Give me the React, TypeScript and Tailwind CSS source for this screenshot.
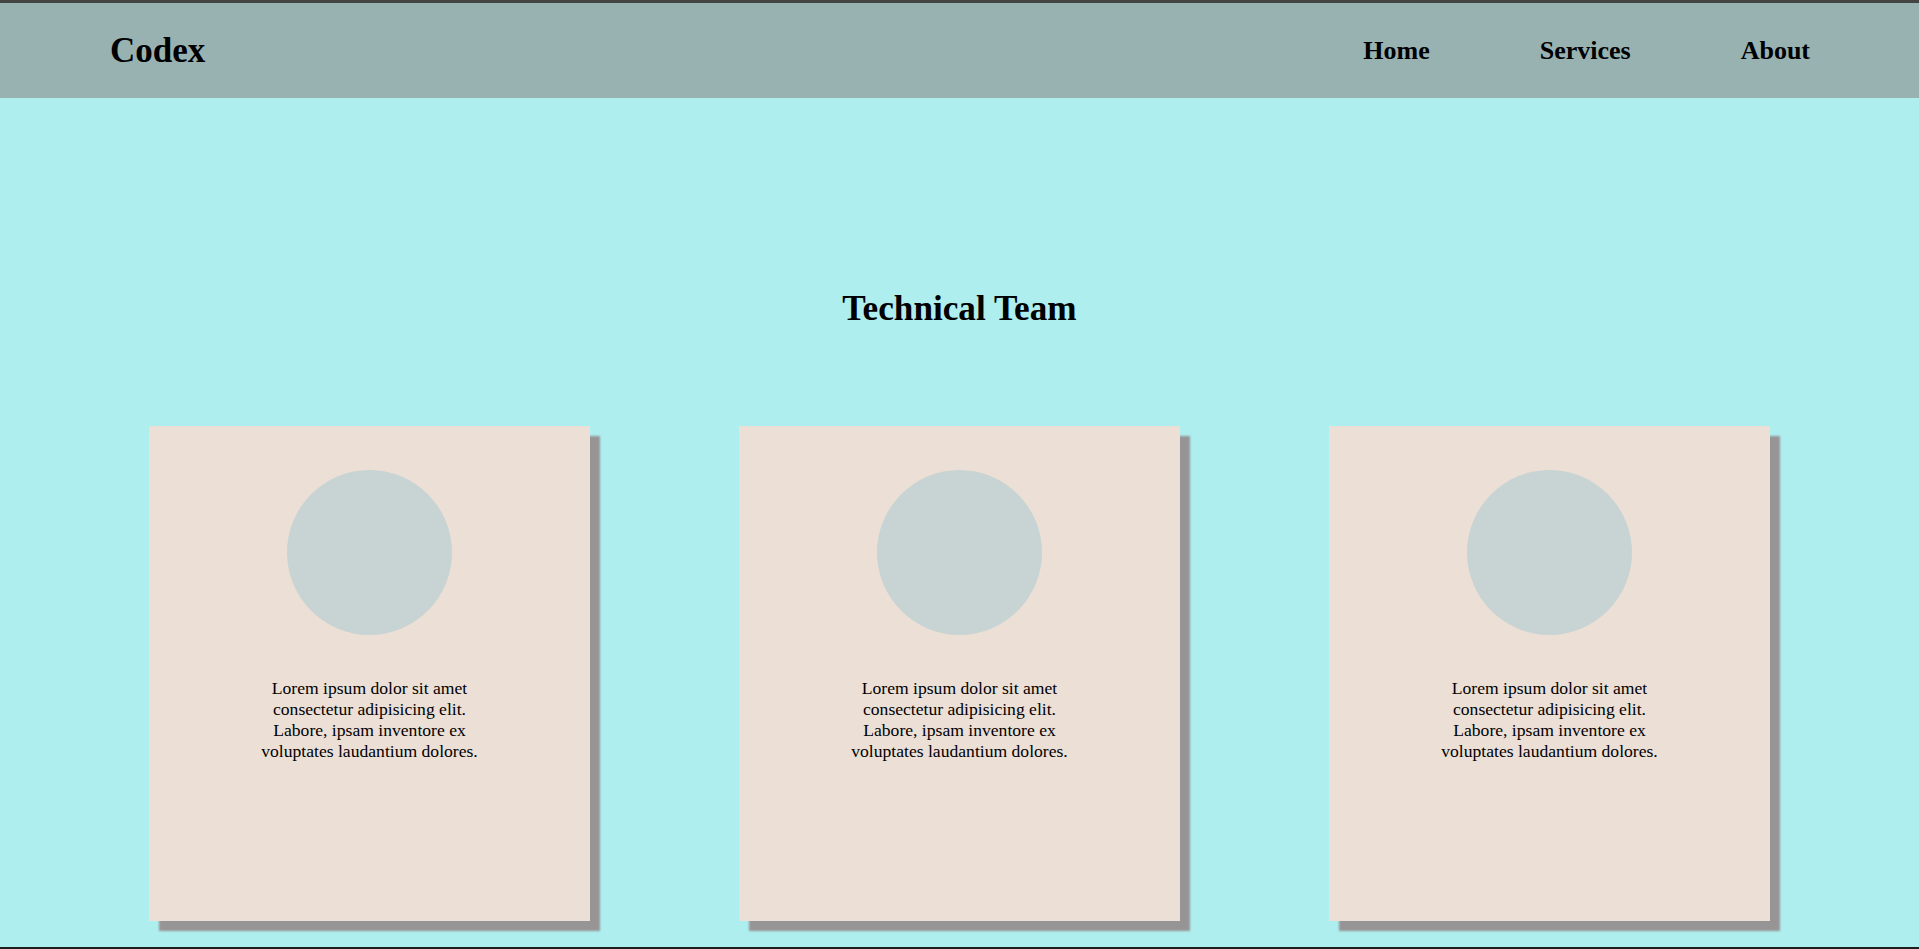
const members = [1, 2, 3];

const TeamCard = () => {
  return (
    <div className="flex h-[495px] w-[441px] flex-col items-center bg-[#ecdfd6] pt-[44px] shadow-[10px_10px_2px_#979496]">
      <div className="h-[165px] w-[165px] rounded-full bg-[#c8d4d3]" />
      <p className="mt-[43px] w-1/2 text-center text-[17.6px] leading-[21px] text-black">
        Lorem ipsum dolor sit amet consectetur adipisicing elit. Labore, ipsam
        inventore ex voluptates laudantium dolores.
      </p>
    </div>
  );
};

const App = () => {
  return (
    <div
      className="flex h-screen flex-col overflow-hidden border-t-[3px] border-b-2 border-t-[#444444] border-b-[#1e1e1e] bg-[#afeeee] text-black"
      style={{ fontFamily: '"Liberation Serif", "Times New Roman", serif' }}
    >
      <header className="flex h-[95px] shrink-0 items-center justify-between bg-[#98b2b2] pl-[110px] pr-[109px]">
        <h1 className="mt-[2px] text-[35px] font-bold">Codex</h1>
        <nav className="flex gap-[110px] text-[26px] font-bold">
          <a href="#">Home</a>
          <a href="#">Services</a>
          <a href="#">About</a>
        </nav>
      </header>

      <main className="flex flex-col items-center">
        <h2 className="mt-[191px] text-[35.2px] font-bold leading-[1.15]">
          Technical Team
        </h2>
        <div className="mt-[97px] flex w-full justify-evenly">
          {members.map((m) => (
            <TeamCard key={m} />
          ))}
        </div>
      </main>
    </div>
  );
};

export default App;
